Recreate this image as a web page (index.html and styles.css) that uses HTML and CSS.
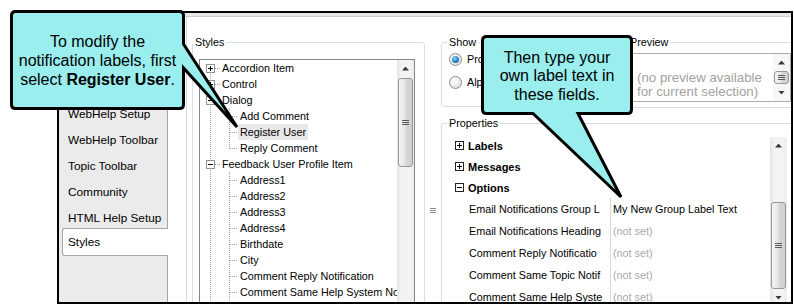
FILE: index.html
```html
<!DOCTYPE html>
<html lang="en">
<head>
    <meta charset="UTF-8">
    <meta name="viewport" content="width=device-width, initial-scale=1.0">
    <title>Skin Editor - Styles</title>
    <link rel="stylesheet" href="styles.css">
</head>
<body>

<div class="window">
    <div class="topband"></div>
    <div class="main">
        <ul class="tabs">
            <li class="tab">WebHelp Setup</li>
            <li class="tab">WebHelp Toolbar</li>
            <li class="tab">Topic Toolbar</li>
            <li class="tab">Community</li>
            <li class="tab">HTML Help Setup</li>
            <li class="tab active">Styles</li>
        </ul>
        <div class="tab-gap"></div>

        <div class="page">
            <fieldset class="group styles-group">
                <legend>Styles</legend>
                <div class="tree-box">
                    <div class="tree">
                        <div class="node l0 first"><span class="exp plus"></span><span class="dash"></span><span class="label">Accordion Item</span></div>
                        <div class="node l0"><span class="exp plus"></span><span class="dash"></span><span class="label">Control</span></div>
                        <div class="node l0"><span class="exp minus"></span><span class="dash"></span><span class="label">Dialog</span></div>
                        <div class="node l1"><span class="dash"></span><span class="label">Add Comment</span></div>
                        <div class="node l1"><span class="dash"></span><span class="label selected">Register User</span></div>
                        <div class="node l1 last"><span class="dash"></span><span class="label">Reply Comment</span></div>
                        <div class="node l0"><span class="exp minus"></span><span class="dash"></span><span class="label">Feedback User Profile Item</span></div>
                        <div class="node l1"><span class="dash"></span><span class="label">Address1</span></div>
                        <div class="node l1"><span class="dash"></span><span class="label">Address2</span></div>
                        <div class="node l1"><span class="dash"></span><span class="label">Address3</span></div>
                        <div class="node l1"><span class="dash"></span><span class="label">Address4</span></div>
                        <div class="node l1"><span class="dash"></span><span class="label">Birthdate</span></div>
                        <div class="node l1"><span class="dash"></span><span class="label">City</span></div>
                        <div class="node l1"><span class="dash"></span><span class="label">Comment Reply Notification</span></div>
                        <div class="node l1"><span class="dash"></span><span class="label">Comment Same Help System Not</span></div>
                        <div class="node l1"><span class="dash"></span><span class="label">Comment Same Topic Notificatio</span></div>
                    </div>
                    <div class="vscroll tree-scroll">
                        <div class="sb-btn"><span class="arrow up"></span></div>
                        <div class="thumb"><span class="grip"></span></div>
                    </div>
                </div>
            </fieldset>

            <div class="splitter"><span class="split-grip"></span></div>

            <div class="right">
                <div class="top-row">
                    <fieldset class="group show-group">
                        <legend class="indent">Show</legend>
                        <div class="radio-row"><span class="radio checked"></span><span class="radio-label">Pro</span></div>
                        <div class="radio-row"><span class="radio"></span><span class="radio-label">Alp</span></div>
                    </fieldset>
                    <fieldset class="group preview-group">
                        <legend>Preview</legend>
                        <div class="preview-box">
                            <div class="preview-text">(no preview available<br>for current selection)</div>
                            <div class="vscroll preview-scroll">
                                <div class="sb-btn"><span class="arrow up"></span></div>
                                <div class="thumb"><span class="grip"></span></div>
                                <div class="sb-btn"><span class="arrow down"></span></div>
                            </div>
                        </div>
                    </fieldset>
                </div>

                <fieldset class="group props-group">
                    <legend class="indent">Properties</legend>
                    <div class="prop-grid">
                        <div class="prop-rows">
                            <div class="cat"><span class="exp plus dark"></span>Labels</div>
                            <div class="cat"><span class="exp plus dark"></span>Messages</div>
                            <div class="cat"><span class="exp minus dark"></span>Options</div>
                            <div class="prop"><span class="prop-name">Email Notifications Group L</span><span class="prop-value">My New Group Label Text</span></div>
                            <div class="prop"><span class="prop-name">Email Notifications Heading</span><span class="prop-value unset">(not set)</span></div>
                            <div class="prop"><span class="prop-name">Comment Reply Notificatio</span><span class="prop-value unset">(not set)</span></div>
                            <div class="prop"><span class="prop-name">Comment Same Topic Notif</span><span class="prop-value unset">(not set)</span></div>
                            <div class="prop"><span class="prop-name">Comment Same Help Syste</span><span class="prop-value unset">(not set)</span></div>
                        </div>
                        <div class="vscroll grid-scroll">
                            <div class="sb-btn"><span class="arrow up"></span></div>
                            <div class="thumb"><span class="grip"></span></div>
                            <div class="sb-btn"><span class="arrow down"></span></div>
                        </div>
                    </div>
                </fieldset>
            </div>
        </div>
    </div>
</div>

<!-- annotation callouts -->
<div class="callout callout-left">
    <svg width="240" height="135" viewBox="0 0 240 135">
        <path d="M5.5 1.5 H169.5 Q173.5 1.5 173.5 5.5 V34 L227 117 L173.5 58 V94.5 Q173.5 98.5 169.5 98.5 H5.5 Q1.5 98.5 1.5 94.5 V5.5 Q1.5 1.5 5.5 1.5 Z"/>
    </svg>
    <p>To modify the<br>notification labels, first<br>select <b>Register User</b>.</p>
</div>

<div class="callout callout-right">
    <svg width="152" height="170" viewBox="0 0 152 170">
        <path d="M5.5 1.5 H146.5 Q150.5 1.5 150.5 5.5 V74.5 Q150.5 78.5 146.5 78.5 H97 L140 162 L52 78.5 H5.5 Q1.5 78.5 1.5 74.5 V5.5 Q1.5 1.5 5.5 1.5 Z"/>
    </svg>
    <p>Then type your<br>own label text in<br>these fields.</p>
</div>

</body>
</html>
```

FILE: styles.css
```css
html, body {
    margin: 0;
    overflow: hidden;
}
body {
    position: relative;
    padding: 11px 0 0 57px;
    background: #fff;
    font-family: "Liberation Sans", Arial, sans-serif;
    font-size: 10.8px;
    color: #000;
}

/* screenshot frame */
.window {
    position: relative;
    box-sizing: border-box;
    width: 736px;
    height: 293px;
    padding: 2px;
    display: flex;
    flex-direction: column;
}
.window::after {
    content: "";
    position: absolute;
    inset: 0;
    border: 2px solid #000;
    z-index: 1;
    pointer-events: none;
}
.topband {
    flex: none;
    height: 3px;
    background: #e6e6e6;
    border-bottom: 1px solid #cdcdcd;
}
.main {
    flex: 1;
    min-height: 0;
    display: flex;
}

/* left tabs (the first ones are hidden under the callout) */
.tabs {
    flex: none;
    list-style: none;
    margin: 0;
    padding: 84px 0 0;
    width: 108px;
    background: #ebebeb;
    border-right: 1px solid #a7a7a7;
    font-size: 11.8px;
}
.tab {
    height: 26px;
    line-height: 26px;
    padding-left: 9px;
    white-space: nowrap;
}
.tab.active {
    margin: -3px -1px 0 3px;
    padding-left: 5px;
    border: 1px solid #a7a7a7;
    border-right: none;
    border-radius: 3px 0 0 3px;
    background: #fff;
}
.tab-gap {
    flex: none;
    width: 18px;
}
.page {
    flex: 1;
    min-width: 0;
    display: flex;
    align-items: flex-start;
    border-left: 1px solid #d3dce4;
    padding-top: 18px;
}

/* group boxes */
.group {
    box-sizing: border-box;
    margin: 0;
    padding: 0;
    min-width: 0;
    border: 1px solid #d5dfe5;
    border-radius: 3px;
}
.group legend {
    padding: 0 2px;
    line-height: 14px;
}
.group legend.indent {
    margin-left: 5px;
}

/* styles tree */
.styles-group {
    flex: none;
    margin-left: 5px;
    width: 233px;
    height: 330px;
}
.tree-box {
    box-sizing: border-box;
    display: flex;
    height: 300px;
    margin: 10px 9px 0 6px;
    border: 1px solid #828790;
}
.tree {
    flex: 1;
    min-width: 0;
    overflow: hidden;
}
.node {
    display: flex;
    align-items: flex-start;
    height: 16px;
    white-space: nowrap;
}
.node.l0 {
    background: repeating-linear-gradient(#a0a0a0 0 1px, transparent 1px 2px) 10px 0 / 1px 16px no-repeat;
}
.node.l0.first {
    background-position: 10px 8px;
}
.node.l1 {
    background:
        repeating-linear-gradient(#a0a0a0 0 1px, transparent 1px 2px) 10px 0 / 1px 16px no-repeat,
        repeating-linear-gradient(#a0a0a0 0 1px, transparent 1px 2px) 29px 0 / 1px 16px no-repeat;
}
.node.l1.last {
    background-size: 1px 16px, 1px 9px;
}
.node .exp {
    margin: 4px 0 0 6px;
}
.dash {
    flex: none;
    height: 1px;
    margin-top: 8px;
    background: repeating-linear-gradient(to right, #a0a0a0 0 1px, transparent 1px 2px);
}
.l0 .dash {
    width: 5px;
}
.l1 .dash {
    width: 8px;
    margin-left: 30px;
}
.label {
    padding: 0 2px;
    line-height: 16px;
}
.label.selected {
    background: #e9e9e9;
}

/* expand boxes */
.exp {
    flex: none;
    box-sizing: border-box;
    width: 9px;
    height: 9px;
    border: 1px solid #919191;
}
.exp.plus {
    background:
        linear-gradient(#000, #000) 1px 3px / 5px 1px no-repeat,
        linear-gradient(#000, #000) 3px 1px / 1px 5px no-repeat,
        #fff;
}
.exp.minus {
    background: linear-gradient(#000, #000) 1px 3px / 5px 1px no-repeat, #fff;
}
.exp.dark {
    border-color: #222;
}

/* scrollbars */
.vscroll {
    flex: none;
    width: 17px;
    display: flex;
    flex-direction: column;
    background: linear-gradient(to right, #e4e4e4, #f3f3f3 25%, #f3f3f3 75%, #ececec);
}
.sb-btn {
    flex: none;
    height: 17px;
    display: flex;
    align-items: center;
    justify-content: center;
}
.arrow {
    width: 7px;
    height: 4px;
    background: #3a3a3a;
    clip-path: polygon(50% 0, 100% 100%, 0 100%);
}
.arrow.down {
    clip-path: polygon(0 0, 100% 0, 50% 100%);
}
.thumb {
    flex: none;
    box-sizing: border-box;
    margin: 0 1px;
    border: 1px solid #979797;
    border-radius: 3px;
    background: linear-gradient(to right, #f5f5f5, #e6e6e6 45%, #d6d6d6 55%, #cfcfcf);
    display: flex;
    align-items: center;
    justify-content: center;
}
.grip {
    width: 7px;
    height: 5px;
    background: repeating-linear-gradient(#5a5a5a 0 1px, transparent 1px 2px);
}
.tree-scroll .thumb {
    margin-top: 1px;
    height: 89px;
}
.preview-scroll {
    background: #f7f7f7;
}
.preview-scroll .thumb {
    height: 13px;
}
.grid-scroll {
    margin-top: 2px;
    height: 170px;
}
.grid-scroll .thumb {
    margin-top: 48px;
    height: 87px;
}

/* splitter */
.splitter {
    flex: none;
    width: 16px;
    align-self: stretch;
}
.split-grip {
    display: block;
    width: 6px;
    height: 5px;
    margin: 173px 0 0 5px;
    background: repeating-linear-gradient(#8a8a8a 0 1px, transparent 1px 2px);
}

/* right side */
.right {
    flex: none;
    width: 350px;
    display: flex;
    flex-direction: column;
}
.top-row {
    display: flex;
    gap: 6px;
}
.show-group {
    flex: none;
    width: 179px;
    height: 72px;
}
.radio-row {
    display: flex;
    align-items: center;
    height: 20px;
    margin-left: 7px;
    white-space: nowrap;
}
.radio-row + .radio-row {
    margin-top: 3px;
}
.radio-label {
    max-width: 14px;
    overflow: hidden;
}
.radio {
    flex: none;
    box-sizing: border-box;
    width: 13px;
    height: 13px;
    margin-right: 5px;
    border: 1px solid #8b8b8b;
    border-radius: 50%;
    background: radial-gradient(circle at 40% 35%, #fff 0, #f1f1f1 40%, #d5d5d5 100%);
    display: flex;
    align-items: center;
    justify-content: center;
}
.radio.checked::after {
    content: "";
    width: 7px;
    height: 7px;
    border-radius: 50%;
    background: radial-gradient(circle at 40% 35%, #9ad8f7 0, #2d8ccf 45%, #174e86 100%);
}
.preview-group {
    flex: 1;
    height: 73px;
    border-right: none;
    border-radius: 3px 0 0 3px;
}
.preview-group legend {
    margin-left: 1px;
}
.preview-box {
    box-sizing: border-box;
    display: flex;
    height: 49px;
    margin: 4px 0 0 5px;
    border: 1px solid #abadb3;
}
.preview-text {
    flex: 1;
    padding: 17px 0 0 4px;
    font-size: 13.3px;
    line-height: 14px;
    color: #a2a2a2;
    white-space: nowrap;
    overflow: hidden;
}

/* property grid */
.props-group {
    margin-top: 8px;
    height: 200px;
    border-right: none;
    border-radius: 3px 0 0 3px;
}
.prop-grid {
    display: flex;
    margin-top: 5px;
}
.prop-rows {
    flex: none;
    width: 328px;
}
.cat {
    display: flex;
    align-items: center;
    height: 21px;
    padding-left: 13px;
    font-size: 11px;
    font-weight: bold;
}
.cat .exp {
    margin-right: 4px;
}
.prop {
    display: flex;
    height: 22px;
    line-height: 22px;
    white-space: nowrap;
}
.prop-name {
    flex: none;
    box-sizing: border-box;
    width: 169px;
    padding-left: 27px;
    border-right: 1px solid #dadada;
    overflow: hidden;
}
.prop-value {
    padding-left: 2px;
}
.prop-value.unset {
    color: #a9a9a9;
}

/* callouts */
.callout {
    position: absolute;
    z-index: 2;
    display: flex;
    align-items: center;
    justify-content: center;
    text-align: center;
    font-size: 16px;
}
.callout svg {
    position: absolute;
    left: 0;
    top: 0;
    overflow: visible;
}
.callout path {
    fill: #9aeeed;
    stroke: #000;
    stroke-width: 3;
}
.callout p {
    position: relative;
    margin: 0;
}
.callout-left {
    left: 10px;
    top: 10px;
    width: 175px;
    height: 100px;
    line-height: 19px;
}
.callout-right {
    box-sizing: border-box;
    left: 481px;
    top: 35px;
    width: 152px;
    height: 80px;
    padding-top: 3px;
    line-height: 18.5px;
}
```
